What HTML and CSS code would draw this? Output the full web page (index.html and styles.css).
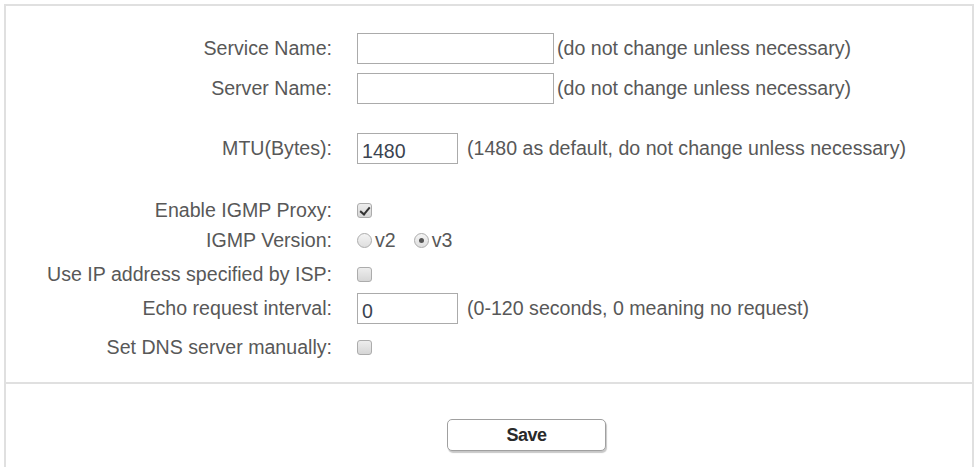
FILE: index.html
```html
<!DOCTYPE html>
<html lang="en">
<head>
  <meta charset="UTF-8">
  <title>PPPoE - Advanced Settings</title>
  <link rel="stylesheet" href="styles.css">
</head>
<body>
  <div class="panel">
    <form class="settings" onsubmit="return false">
      <div class="row">
        <label class="label" for="service">Service Name:</label>
        <div class="field">
          <input type="text" id="service" class="text wide">
          <span class="hint tight">(do not change unless necessary)</span>
        </div>
      </div>
      <div class="row row-next">
        <label class="label" for="server">Server Name:</label>
        <div class="field">
          <input type="text" id="server" class="text wide">
          <span class="hint tight">(do not change unless necessary)</span>
        </div>
      </div>
      <div class="row row-mtu">
        <label class="label" for="mtu">MTU(Bytes):</label>
        <div class="field">
          <input type="text" id="mtu" class="text short" value="1480">
          <span class="hint">(1480 as default, do not change unless necessary)</span>
        </div>
      </div>

      <div class="row check-row row-igmp">
        <label class="label" for="igmp">Enable IGMP Proxy:</label>
        <div class="field"><input type="checkbox" id="igmp" class="check" checked></div>
      </div>
      <div class="row check-row">
        <span class="label">IGMP Version:</span>
        <div class="field">
          <label class="choice"><input type="radio" name="igmpver" class="radio">v2</label>
          <label class="choice"><input type="radio" name="igmpver" class="radio" checked>v3</label>
        </div>
      </div>
      <div class="row check-row row-step">
        <label class="label" for="isp-ip">Use IP address specified by ISP:</label>
        <div class="field"><input type="checkbox" id="isp-ip" class="check"></div>
      </div>
      <div class="row row-step">
        <label class="label" for="echo">Echo request interval:</label>
        <div class="field">
          <input type="text" id="echo" class="text short" value="0">
          <span class="hint">(0-120 seconds, 0 meaning no request)</span>
        </div>
      </div>
      <div class="row check-row row-dns">
        <label class="label" for="dns">Set DNS server manually:</label>
        <div class="field"><input type="checkbox" id="dns" class="check"></div>
      </div>
    </form>

    <div class="actions">
      <button type="button" class="btn">Save</button>
    </div>
  </div>
</body>
</html>
```

FILE: styles.css
```css
body {
  margin: 0;
  background: #fff;
  color: #585858;
  font-family: "Liberation Sans", Arial, sans-serif;
  font-size: 19.6px;
}
.panel {
  margin: 4px 2px 0 4px;
  border: 2px solid #e0e0e0;
  border-bottom: none;
}
.settings {
  padding: 27px 0 20px;
  border-bottom: 2px solid #e0e0e0;
}
.row {
  display: flex;
  align-items: flex-start;
  min-height: 31px;
}
.row-next {
  margin-top: 9px;
}
.row-mtu {
  margin-top: 29px;
}
.check-row {
  align-items: center;
  min-height: 30px;
}
.row-igmp {
  margin-top: 31px;
}
.row-step {
  margin-top: 4px;
}
.row-dns {
  margin-top: 8px;
}
.label {
  width: 326px;
  flex-shrink: 0;
  text-align: right;
  line-height: 22px;
  padding-top: 4px;
}
.check-row .label {
  padding-top: 0;
}
.field {
  margin-left: 25px;
  display: flex;
  align-items: center;
}
.text {
  box-sizing: border-box;
  height: 31px;
  margin: 0;
  padding: 7px 4px 1px;
  border: 1px solid #ababab;
  border-radius: 0;
  font: inherit;
  color: #3b4350;
  outline: none;
}
.wide {
  width: 197px;
}
.short {
  width: 101px;
}
.hint {
  margin-left: 9px;
  white-space: nowrap;
}
.hint.tight {
  margin-left: 3px;
}
.check, .radio {
  -webkit-appearance: none;
  appearance: none;
  box-sizing: border-box;
  flex-shrink: 0;
  width: 15px;
  height: 15px;
  margin: 0;
  border: 1px solid #acacac;
  background: linear-gradient(#ededed, #d6d6d6);
  position: relative;
}
.check {
  border-radius: 3px;
}
.check:checked::after {
  content: "";
  position: absolute;
  left: 4px;
  top: 1px;
  width: 4px;
  height: 8px;
  border: solid #333;
  border-width: 0 2px 2px 0;
  transform: rotate(40deg);
}
.radio {
  border-radius: 50%;
  background: linear-gradient(#f4f4f4, #dedede);
}
.radio:checked::after {
  content: "";
  position: absolute;
  left: 4px;
  top: 4px;
  width: 5px;
  height: 5px;
  border-radius: 50%;
  background: #555;
}
.choice {
  display: flex;
  align-items: center;
  gap: 3px;
  margin-right: 18px;
}
.actions {
  padding: 35px 0 30px 441px;
}
.btn {
  width: 159px;
  height: 32px;
  background: #fff;
  border: 1px solid #a0a0a0;
  border-radius: 5px;
  box-shadow: 1px 2px 1px rgba(0, 0, 0, 0.22);
  color: #2a2a2a;
  font-family: "Liberation Sans", Arial, sans-serif;
  font-size: 18px;
  font-weight: bold;
  letter-spacing: -0.5px;
  cursor: pointer;
}
```
